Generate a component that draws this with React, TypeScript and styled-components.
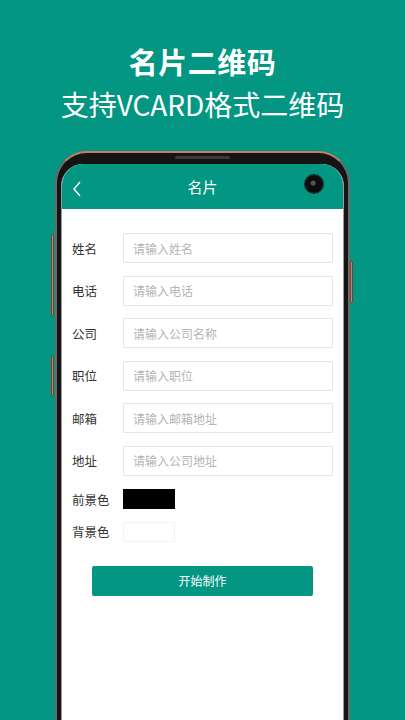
import styled, {createGlobalStyle} from 'styled-components';

const teal = '#029683';

const GlobalStyle = createGlobalStyle`
  body {
    margin: 0;
    background: ${teal};
    overflow: hidden;
    font-family: 'Noto Sans CJK SC', 'Noto Sans', sans-serif;
  }
`;

const Page = styled.div`
  width: 405px;
  height: 720px;
  background: ${teal};
  display: flex;
  flex-direction: column;
  align-items: center;
  overflow: hidden;
`;

const Title = styled.h1`
  margin: 41px 0 0;
  height: 40px;
  line-height: 40px;
  font-size: 29px;
  font-weight: 700;
  color: #fff;
  letter-spacing: 0.5px;
`;

const SubTitle = styled.h2`
  margin: 4px 0 0;
  height: 38px;
  line-height: 38px;
  font-size: 28px;
  font-weight: 400;
  color: #fff;
`;

// 폰 프레임
const Phone = styled.div`
  position: relative;
  box-sizing: border-box;
  margin-top: 28px;
  width: 295px;
  height: 700px;
  flex-shrink: 0;
  padding: 11px 4px 0 4px;
  background: #141414;
  border: 2px solid #6a6a6a;
  border-top-color: #c97c63;
  border-radius: 32px 32px 0 0;
`;

const Notch = styled.div`
  position: absolute;
  top: 3px;
  left: 118px;
  width: 55px;
  height: 3px;
  border-radius: 2px;
  background: #3a3a3a;
`;

const SideKey = styled.div<{$top: number; $height: number; $right?: boolean}>`
  position: absolute;
  top: ${p => p.$top}px;
  ${p => (p.$right ? 'right: -5px;' : 'left: -6px;')}
  width: 3px;
  height: ${p => p.$height}px;
  background: #c98470;
  border: 1px solid #6e4334;
  border-radius: 1px;
  box-sizing: border-box;
`;

const Screen = styled.div`
  height: 100%;
  background: #fff;
  border-radius: 22px 22px 0 0;
  overflow: hidden;
  border-left: 1px solid #9a9a9a;
  border-right: 1px solid #9a9a9a;
  box-sizing: border-box;
`;

const Header = styled.div`
  position: relative;
  height: 45px;
  background: ${teal};
  display: flex;
  align-items: center;
  justify-content: center;
  color: #fff;
  font-size: 15px;
`;

const Back = styled.svg`
  position: absolute;
  left: 10px;
  top: 17px;
`;

const Camera = styled.div`
  position: absolute;
  left: 243px;
  top: 11px;
  width: 18px;
  height: 18px;
  border-radius: 50%;
  background: radial-gradient(circle at 45% 45%, #555 0 2px, #0c0c0c 3px);
  box-shadow: 0 0 0 1px #222;
`;

const Form = styled.div`
  padding: 24px 10px 0 10px;
  display: flex;
  flex-direction: column;
`;

const Row = styled.div`
  display: flex;
  align-items: center;
  height: 30px;
  margin-bottom: 12.6px;
`;

const Label = styled.span`
  width: 51px;
  flex-shrink: 0;
  font-size: 12.5px;
  color: #333;
`;

const Input = styled.input`
  flex: 1;
  min-width: 0;
  box-sizing: border-box;
  height: 30px;
  padding: 0 0 0 9px;
  border: 1px solid #e6e6e6;
  border-radius: 1px;
  outline: none;
  font-family: inherit;
  font-size: 12px;
  color: #333;

  &::placeholder {
    color: #b4b4b4;
  }
`;

const ColorRow = styled.div`
  display: flex;
  align-items: center;
  height: 21px;
  margin-bottom: 11.5px;
`;

const Swatch = styled.div<{$color: string}>`
  width: 52px;
  height: 20px;
  background: ${p => p.$color};
  border: 1px solid ${p => (p.$color === '#fff' ? '#f2f2f2' : p.$color)};
  box-sizing: border-box;
`;

const StartButton = styled.button`
  align-self: center;
  margin-top: 12px;
  width: 221px;
  height: 30px;
  border: none;
  border-radius: 2px;
  background: ${teal};
  color: #fff;
  font-family: inherit;
  font-size: 12px;
  cursor: pointer;
`;

const fields = [
  {label: '姓名', placeholder: '请输入姓名'},
  {label: '电话', placeholder: '请输入电话'},
  {label: '公司', placeholder: '请输入公司名称'},
  {label: '职位', placeholder: '请输入职位'},
  {label: '邮箱', placeholder: '请输入邮箱地址'},
  {label: '地址', placeholder: '请输入公司地址'},
];

const App = () => {
  return (
    <>
      <GlobalStyle />
      <Page>
        <Title>名片二维码</Title>
        <SubTitle>支持VCARD格式二维码</SubTitle>
        <Phone>
          <Notch />
          <SideKey $top={81} $height={82} />
          <SideKey $top={203} $height={40} />
          <SideKey $top={108} $height={42} $right />
          <Screen>
            <Header>
              <Back width="10" height="16" viewBox="0 0 10 16">
                <polyline points="8,1 2,8 8,15" fill="none" stroke="#fff" strokeWidth="1.4" />
              </Back>
              名片
              <Camera />
            </Header>
            <Form>
              {fields.map(f => (
                <Row key={f.label}>
                  <Label>{f.label}</Label>
                  <Input placeholder={f.placeholder} />
                </Row>
              ))}
              <ColorRow>
                <Label>前景色</Label>
                <Swatch $color="#000" />
              </ColorRow>
              <ColorRow>
                <Label>背景色</Label>
                <Swatch $color="#fff" />
              </ColorRow>
              <StartButton>开始制作</StartButton>
            </Form>
          </Screen>
        </Phone>
      </Page>
    </>
  );
};

export default App;
